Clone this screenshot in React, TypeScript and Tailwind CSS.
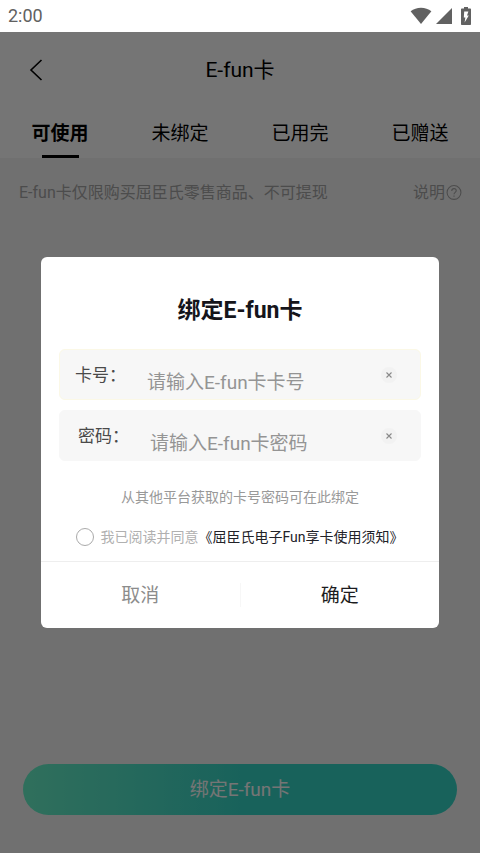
import { useState } from "react";

type FieldProps = {
  id: string;
  label: string;
  placeholder: string;
  className: string;
};

const tabs = ["可使用", "未绑定", "已用完", "已赠送"];

function StatusBar() {
  return (
    <div className="flex h-8 items-center justify-between bg-white pr-2 pl-2 text-[#616161]">
      <span className="text-lg leading-8">2:00</span>
      <div className="flex items-center">
        <svg width="22" height="18" viewBox="0 0 22 18" fill="currentColor" aria-hidden="true">
          <path d="M11 17 .6 4.2C3.6 2 7.1.8 11 .8s7.4 1.2 10.4 3.4z" />
        </svg>
        <svg className="ml-1" width="16" height="16" viewBox="0 0 16 16" fill="currentColor" aria-hidden="true">
          <path d="M0 16 16 0v16z" />
        </svg>
        <svg className="ml-2" width="12" height="18" viewBox="0 0 12 18" fill="currentColor" aria-hidden="true">
          <path
            fillRule="evenodd"
            d="M4 0h4v1.500h2c.6 0 1 .4 1 1V17c0 .6-.4 1-1 1H2c-.6 0-1-.4-1-1V2.500c0-.6.4-1 1-1h2zM4.200 4.500 3.800 10.500h1.600L4.600 15.500 8.800 8.500H7l1.400-4z"
          />
        </svg>
      </div>
    </div>
  );
}

function CardField({ id, label, placeholder, className }: FieldProps) {
  const [value, setValue] = useState("");

  return (
    <div className={`flex h-[51px] items-center rounded-md border bg-[#f7f7f7] pr-[23px] ${className}`}>
      <label htmlFor={id} className="w-18 shrink-0 pt-0.5 text-[17px] text-[#4a4a4a]">
        {label}
      </label>
      <input
        id={id}
        value={value}
        onChange={(event) => setValue(event.target.value)}
        placeholder={placeholder}
        className="min-w-0 flex-1 bg-transparent pt-4 text-[19px] leading-7 text-[#333] outline-none placeholder:text-[#949494]"
      />
      <button
        type="button"
        aria-label="清除"
        onClick={() => setValue("")}
        className="flex size-4 shrink-0 items-center justify-center rounded-full bg-[#f2f2f2] text-[#888]"
      >
        <svg width="6" height="6" viewBox="0 0 6 6" fill="none" stroke="currentColor" aria-hidden="true">
          <path d="m.5.5 5 5m0-5-5 5" strokeWidth="1.1" />
        </svg>
      </button>
    </div>
  );
}

function BindDialog() {
  return (
    <div
      role="dialog"
      aria-modal="true"
      aria-labelledby="bind-title"
      className="mx-[41px] min-w-0 flex-1 rounded-md bg-white"
    >
      <h2 id="bind-title" className="pt-9 text-center text-[23px] leading-9 font-bold text-[#15151b]">
        绑定E-fun卡
      </h2>
      <div className="mt-5 flex flex-col gap-[10px] px-[18px]">
        <CardField
          id="card-number"
          label="卡号："
          placeholder="请输入E-fun卡卡号"
          className="border-[#fbf8e6] pl-[15px]"
        />
        <CardField
          id="card-password"
          label="密码："
          placeholder="请输入E-fun卡密码"
          className="border-[#f7f7f7] pl-[18px]"
        />
      </div>
      <p className="mt-6 text-center text-sm leading-6 text-[#999]">从其他平台获取的卡号密码可在此绑定</p>
      <div className="mt-4 flex items-center justify-center text-sm leading-6">
        <input
          id="agree"
          type="checkbox"
          className="mr-1.5 size-[18px] appearance-none rounded-full border border-[#aaa] bg-white checked:bg-[#36d6c7]"
        />
        <label htmlFor="agree" className="text-[#b0b0b0]">
          我已阅读并同意
        </label>
        <a href="#terms" className="text-[#222228]">
          《屈臣氏电子Fun享卡使用须知》
        </a>
      </div>
      <div className="mt-3 flex h-[67px] items-center border-t border-[#eee] text-[19px]">
        <button type="button" className="h-full flex-1 pt-0.5 text-[#8c8c8c]">
          取消
        </button>
        <span className="h-6 w-px bg-[#f7f7f7]" />
        <button type="button" className="h-full flex-1 pt-0.5 text-[#1c1c20]">
          确定
        </button>
      </div>
    </div>
  );
}

export default function App() {
  return (
    <div className="flex min-h-screen flex-col bg-[#f4f4f4] font-[Roboto,'Noto_Sans_CJK_SC',sans-serif]">
      <StatusBar />
      <div className="relative flex flex-1 flex-col">
        <header className="bg-white text-black">
          <div className="grid h-[75px] grid-cols-[1fr_auto_1fr] items-center px-7">
            <button type="button" aria-label="返回" className="justify-self-start">
              <svg width="16" height="22" viewBox="0 0 16 22" fill="none" stroke="currentColor" aria-hidden="true">
                <path d="M13.500 1 3 11l10.500 10" strokeWidth="1.600" />
              </svg>
            </button>
            <h1 className="pt-0.5 text-[21px]">E-fun卡</h1>
          </div>
          <nav className="grid h-[51px] grid-cols-4 text-[19px]">
            {tabs.map((tab, index) => (
              <button key={tab} type="button" className="flex flex-col items-center justify-between pt-[13px]">
                <span className={index === 0 ? "leading-7 font-bold" : "leading-7"}>{tab}</span>
                {index === 0 ? <span className="h-[3px] w-[37px] bg-black" /> : null}
              </button>
            ))}
          </nav>
        </header>
        <div className="flex items-center justify-between pt-[23px] pr-[18px] pl-[19px] text-base leading-6 text-[#a6a6a6]">
          <p>E-fun卡仅限购买屈臣氏零售商品、不可提现</p>
          <a href="#help" className="flex items-center">
            说明
            <svg className="ml-px" width="16" height="16" viewBox="0 0 15 15" fill="none" stroke="currentColor" aria-hidden="true">
              <circle cx="7.5" cy="7" r="6.500" />
              <path d="M5.400 5.600c0-1.300.9-2.200 2.100-2.200s2.100.8 2.100 1.900c0 1.500-2.100 1.700-2.100 3.400M7.500 9.800v1.200" />
            </svg>
          </a>
        </div>
        <button
          type="button"
          className="mx-[23px] mt-auto mb-[38px] h-[51px] rounded-full bg-linear-to-r from-[#68f2c9] via-[#36d6c7] via-50% to-[#36d6c7] pt-0.5 text-[19px] text-white"
        >
          绑定E-fun卡
        </button>
        <div className="absolute inset-0 flex items-center justify-center bg-black/54">
          <BindDialog />
        </div>
      </div>
    </div>
  );
}
